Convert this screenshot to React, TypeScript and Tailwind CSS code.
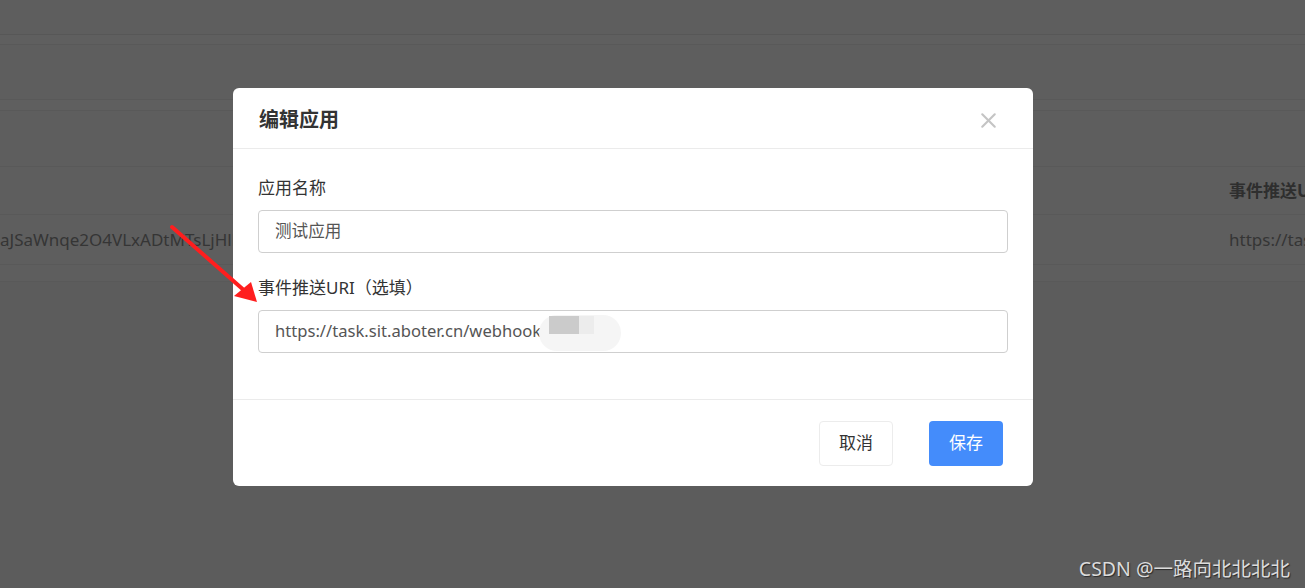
import { X } from "lucide-react";

const font = { fontFamily: '"Segoe UI", "Noto Sans", "Noto Sans CJK SC", sans-serif' };

function BackgroundTable() {
  return (
    <div className="flex flex-col text-[17px] text-[#353535]">
      <div className="h-[35px] border-b border-[#575757]" />
      <div className="h-[9px] bg-[#5f5f5f]" />
      <div className="h-[56px] border-t border-b border-[#595959]" />
      <div className="h-[10px] bg-[#5f5f5f]" />
      <div className="h-[57px] border-t border-b border-[#595959]" />
      <div className="flex h-[48px] items-center border-b border-[#595959]">
        <div className="w-[1229px] shrink-0" />
        <div className="shrink-0 whitespace-nowrap font-bold text-[#2e2e2e]">事件推送URI</div>
      </div>
      <div className="flex h-[50px] items-center border-b border-[#595959]">
        <div className="w-[233px] shrink-0 overflow-hidden whitespace-nowrap">aJSaWnqe2O4VLxADtMTsLjHllI</div>
        <div className="w-[996px] shrink-0" />
        <div className="shrink-0 whitespace-nowrap">https://task.sit.aboter.cn</div>
      </div>
      <div className="h-[17px] border-b border-[#595959]" />
    </div>
  );
}

function Field({ label, value, blur }: { label: string; value: string; blur?: boolean }) {
  return (
    <div className="flex flex-col">
      <div className="h-[22px] text-[17px] leading-[22px] text-[#333]">{label}</div>
      <div className="relative mt-[11px] flex h-[43px] items-center rounded-[4px] border border-[#cfcfcf] px-4 text-[16.6px] text-[#555]">
        {value}
        {blur && (
          <div className="absolute left-[280px] top-[4px] flex h-[36px] w-[82px] items-center rounded-full bg-[#f5f5f5]">
            <div className="ml-[10px] h-[18px] w-[30px] -translate-y-[8px] bg-[#cbcbcb]" />
            <div className="h-[18px] w-[15px] -translate-y-[8px] bg-[#ececec]" />
          </div>
        )}
      </div>
    </div>
  );
}

export default function App() {
  return (
    <div className="relative h-[588px] w-[1305px] overflow-hidden bg-[#5c5c5c]" style={font}>
      <div className="overflow-hidden bg-[#5e5e5e]">
        <BackgroundTable />
      </div>

      <div className="absolute left-[233px] top-[88px] flex w-[800px] flex-col rounded-[6px] bg-white">
        <div className="flex h-[61px] items-center justify-between border-b border-[#ebebeb] pl-[26px] pr-[32px] pt-[3px]">
          <span className="text-[20px] font-bold text-[#333]">编辑应用</span>
          <X className="mt-[2px] h-[25px] w-[25px] text-[#c4c4c4]" strokeWidth={2} />
        </div>
        <div className="flex flex-col gap-[24px] px-[25px] pb-[46px] pt-[28px]">
          <Field label="应用名称" value="测试应用" />
          <Field label="事件推送URI（选填）" value="https://task.sit.aboter.cn/webhook" blur />
        </div>
        <div className="flex h-[87px] items-center justify-end gap-[36px] border-t border-[#ebebeb] pr-[30px]">
          <button className="h-[45px] w-[74px] rounded-[4px] border border-[#ececec] bg-white text-[17px] text-[#333]">
            取消
          </button>
          <button className="h-[45px] w-[74px] rounded-[4px] bg-[#448cfb] text-[17px] text-white">保存</button>
        </div>
      </div>

      <svg className="absolute left-0 top-0" width="1305" height="588" viewBox="0 0 1305 588">
        <line x1="172" y1="227" x2="246" y2="292" stroke="#ff1e1e" strokeWidth="4" strokeLinecap="round" />
        <polygon points="257,302 234,296 251,282" fill="#ff1e1e" />
      </svg>

      <div
        className="absolute right-[15px] top-[554px] text-[19.5px] text-[#dcdcdc]"
        style={{ textShadow: "1px 1px 1px #2a2a2a" }}
      >
        CSDN @一路向北北北北
      </div>
    </div>
  );
}
